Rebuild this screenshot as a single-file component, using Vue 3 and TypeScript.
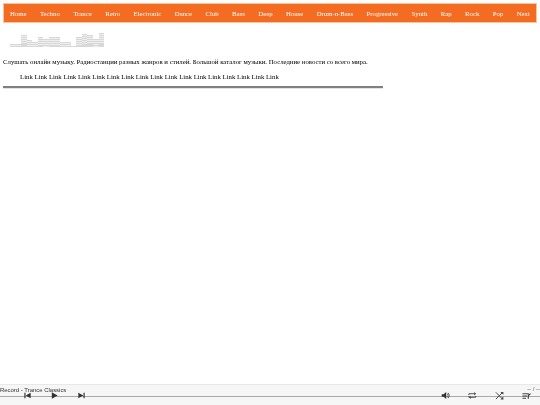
<script setup lang="ts">
const navItems: string[] = ['Home','Techno','Trance','Retro','Electronic','Dance','Club','Bass','Deep','House','Drum-n-Bass','Progressive','Synth','Rap','Rock','Pop','Next']
const bars: number[] = [3,3,12,7,5,10,8,10,10,5,5,1,10,13,12,8,14]
const links: string[] = Array.from({ length: 18 }, () => 'Link')
</script>

<template>
  <div class="page">
    <nav class="nav">
      <a v-for="item in navItems" :key="item" class="nav-item">{{ item }}</a>
    </nav>
    <div class="logo">
      <span v-for="(h, i) in bars" :key="i" class="bar" :style="{ height: h + 'px' }"></span>
    </div>
    <p class="intro">Слушать онлайн музыку. Радиостанции разных жанров и стилей. Большой каталог музыки. Последние новости со всего мира.</p>
    <div class="links">{{ links.join(' ') }}</div>
    <hr class="rule" />
    <footer class="player">
      <span class="title">Record - Trance Classics</span>
      <span class="time">-- / --</span>
      <div class="track"></div>
      <div class="controls">
        <div class="group left">
          <svg class="ic" viewBox="0 0 10 10"><path d="M1.500 2h1.300v6H1.500zM8.500 2v6L3 5z" fill="#333"/></svg>
          <svg class="ic" viewBox="0 0 10 10"><path d="M2 1.500l6.500 3.500L2 8.500z" fill="#333"/></svg>
          <svg class="ic" viewBox="0 0 10 10"><path d="M7.200 2h1.300v6H7.200zM1.500 2v6L7 5z" fill="#333"/></svg>
        </div>
        <div class="group right">
          <svg class="ic" viewBox="0 0 10 10"><path d="M.8 3.500h2L5.800 1v8l-3-2.500h-2z" fill="#333"/><path d="M7 3a3 3 0 0 1 0 4M8 2a4.500 4.500 0 0 1 0 6" fill="none" stroke="#444" stroke-width=".9"/></svg>
          <svg class="ic" viewBox="0 0 10 10"><path d="M1 4.500V3h6.500M1 5.500V7h7.500V5.500" fill="none" stroke="#444" stroke-width="1"/><path d="M7 1l2 2-2 2zM3 5.500L1 7l2 2z" fill="#444"/></svg>
          <svg class="ic" viewBox="0 0 10 10"><path d="M1 1.500l7.500 7.500M1 9l7.500-7.500" fill="none" stroke="#444" stroke-width="1.100"/><path d="M6 1h3.300v3.300zM6 9.500h3.300V6.200z" fill="#444"/></svg>
          <svg class="ic" viewBox="0 0 10 10"><path d="M.5 2.500h7v1.200h-7zM.5 5h5v1.200h-5zM.5 7.500h4v1.200h-4z" fill="#444"/><path d="M7 4v4.500" stroke="#333" stroke-width="1.200"/><path d="M7 4l2.500-1.500v1.500L7 5.500z" fill="#333"/></svg>
        </div>
      </div>
    </footer>
  </div>
</template>

<style scoped>
.page {
  height: 405px;
  display: flex;
  flex-direction: column;
  font-family: "Liberation Serif", serif;
  color: #000;
  overflow: hidden;
  filter: blur(0.35px);
}
.nav {
  margin: 3px 3px 0;
  height: 20px;
  background: #f46b22;
  border: 1px solid #f8c49c;
  box-sizing: border-box;
  display: flex;
  justify-content: space-between;
  align-items: center;
  padding: 1px 6px 0 6px;
  font-size: 6.780px;
  color: #fff;
}
.logo {
  margin: 10px 0 0 10px;
  height: 14px;
  width: 94px;
  display: flex;
  align-items: flex-end;
}
.bar {
  flex: 1;
  background: repeating-linear-gradient(to bottom, #d8d8d8 0 1.400px, #eeeeee 1.400px 1.900px);
}
.intro {
  margin: 11px 0 0 3px;
  font-size: 6.780px;
  line-height: 8px;
}
.links {
  margin: 6px 0 0 20px;
  font-size: 6.780px;
  line-height: 9px;
}
.rule {
  width: 380px;
  margin: 5px 0 0 3px;
  border: 0;
  height: 2px;
  background: #808080;
  border-bottom: 1px solid #e4e4e4;
}
.player {
  margin-top: auto;
  height: 21px;
  position: relative;
  background: #f6f6f6;
  border-top: 1px solid #e8e8e8;
  box-sizing: border-box;
}
.title {
  position: absolute;
  left: 0;
  top: 1px;
  font: 5.950px/9px "Liberation Sans", sans-serif;
  color: #333;
  z-index: 1;
}
.time {
  position: absolute;
  right: 0;
  top: 0;
  font: 5.950px/9px "Liberation Sans", sans-serif;
  color: #666;
}
.track {
  position: absolute;
  left: 0;
  right: 0;
  top: 11px;
  height: 1px;
  background: #a8a8a8;
}
.controls {
  position: absolute;
  left: 0;
  right: 0;
  top: 5px;
  display: flex;
  justify-content: space-between;
}
.group {
  display: flex;
  gap: 18px;
}
.left { margin-left: 23px; }
.right { margin-right: 9px; }
.ic {
  width: 9px;
  height: 9px;
  display: block;
  margin-top: 1px;
}
</style>
